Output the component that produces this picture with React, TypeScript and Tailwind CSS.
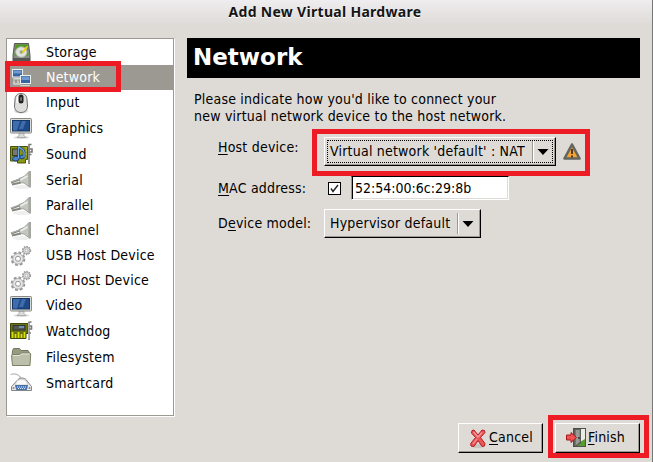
import type { ReactNode } from 'react';

function Svg({ children, size = 24 }: { children: ReactNode; size?: number }) {
  return <svg width={size} height={size} viewBox="0 0 24 24" fill="none" className="block shrink-0">{children}</svg>;
}

function DiskIcon() {
  return (
    <Svg>
      <path d="M4.500 3.500h14l1.500 12v5.500h-17v-5.500z" fill="#8a8c86" stroke="#555753" />
      <path d="M5.500 4.500h12l1 11h-14z" fill="#4e9a20" />
      <ellipse cx="11.300" cy="12" rx="5.800" ry="5.300" fill="#dfe3d8" stroke="#a9aea1" />
      <circle cx="11.300" cy="12" r="1.700" fill="#9ba193" />
      <path d="M12 12l4-5.500 2-.5-1 2.500-4 5z" fill="#edd400" />
      <path d="M3 18h17v3H3z" fill="#555753" />
    </Svg>
  );
}

function NetworkIcon() {
  return (
    <Svg>
      <path d="M4 13v5h7M8 13v4" stroke="#d3d7cf" strokeWidth="1.500" />
      <path d="M3.500 11.500h7l1.500 2.500H2z" fill="#d3d7cf" stroke="#888a85" strokeWidth=".7" />
      <rect x="2.500" y="3.500" width="10" height="7.500" fill="#3465a4" stroke="#eeeeec" />
      <path d="M3.500 4.500h8v3h-8z" fill="#6f9bd1" />
      <rect x="10.500" y="9.500" width="10" height="8" fill="#3465a4" stroke="#eeeeec" />
      <path d="M11.500 10.500h8v3.500h-8z" fill="#6f9bd1" />
      <path d="M10.500 18.500h9l1.500 2H9z" fill="#d3d7cf" stroke="#888a85" strokeWidth=".7" />
    </Svg>
  );
}

function MouseIcon() {
  return (
    <Svg>
      <ellipse cx="11" cy="20" rx="7" ry="2.500" fill="#ddd" />
      <path d="M5 9c0-4 2-6.500 6-6.500S17 5 17 9l.5 6c0 4-2.500 6.500-6.500 6.500S4.500 19 4.500 15z" fill="#dededc" stroke="#6b6d69" />
      <path d="M6.500 9c0-3 1-4.500 3-5v7l-3 1z" fill="#fff" />
      <rect x="8.500" y="3.500" width="5" height="9" rx="2.500" fill="#222" />
      <rect x="10.300" y="6" width="1.500" height="4" rx=".7" fill="#888" />
    </Svg>
  );
}

function MonitorIcon() {
  return (
    <Svg>
      <ellipse cx="11.500" cy="21.500" rx="8" ry="1.500" fill="#ddd" />
      <path d="M9 17h5v2.500l2 2H7l2-2z" fill="#dcdddb" stroke="#9a9c98" strokeWidth=".7" />
      <rect x=".5" y="2.500" width="21" height="14.500" rx=".8" fill="#dcdcd8" stroke="#888a85" />
      <rect x="2.500" y="4.500" width="17" height="10.500" fill="#204a87" stroke="#163766" />
      <path d="M3 5h7L7 14.500H3zM12 5h4l-3 8h-4z" fill="#4a78b8" opacity=".75" />
    </Svg>
  );
}

function SoundIcon() {
  return (
    <Svg>
      <path d="M.5 4.500h17v13h-2v3.500h-8v-2h-7z" fill="#8a9810" stroke="#4b5310" />
      <rect x="2.500" y="7" width="7" height="6.500" fill="#777975" stroke="#3b4210" />
      <path d="M2.500 16.500h4M15.500 6h1.500M15.500 9h1.500M15.500 12h1.500" stroke="#c4d025" />
      <path d="M19 22V2.500h2.500M19.500 7h2.500v3h-2.500M19 12.500h2.500" stroke="#777975" strokeWidth="1.600" />
      <path d="M8.500 16V4.500c1 2.500 5.500 2 5.500 5.500v4.500" stroke="#173e73" strokeWidth="2.600" />
      <ellipse cx="5.800" cy="16.700" rx="3.300" ry="2.300" fill="#4b85ce" stroke="#173e73" />
      <ellipse cx="12" cy="15" rx="2.300" ry="1.900" fill="#4b85ce" stroke="#173e73" />
      <path d="M8.500 16V4.500c1 2.500 5.500 2 5.500 5.500v5" stroke="#73a6df" strokeWidth="1.300" />
    </Svg>
  );
}

function ConnectorIcon() {
  return (
    <Svg>
      <ellipse cx="12" cy="19" rx="9" ry="2" fill="#efefef" />
      <path d="M1 14.500l10-3.500M2 16.500l9-2" stroke="#85877f" strokeWidth="2" />
      <path d="M1 14l10-3.500" stroke="#b9bbb5" strokeWidth=".9" />
      <path d="M9 10.500l5-2L19 3.500v15L14 15l-4-.5z" fill="#c4c7c0" stroke="#92958e" strokeWidth=".8" />
      <path d="M10.500 12l7-4" stroke="#eceeea" strokeWidth="1.500" />
      <path d="M20 3v16.500" stroke="#a5a8a1" strokeWidth="2" />
    </Svg>
  );
}

function GearsIcon() {
  return (
    <Svg>
      <circle cx="16.500" cy="6.500" r="3.200" fill="#ddd" stroke="#aaa" strokeWidth="1" />
      <circle cx="16.500" cy="6.500" r="4" stroke="#999" strokeWidth="1.300" strokeDasharray="1.600 1" />
      <circle cx="16.500" cy="6.500" r="1.300" fill="#fff" stroke="#aaa" strokeWidth=".8" />
      <circle cx="8" cy="14.800" r="6.300" stroke="#969696" strokeWidth="2" strokeDasharray="2.900 2" />
      <circle cx="8" cy="14.800" r="5.300" fill="#e5e5e3" stroke="#aaa" strokeWidth=".9" />
      <circle cx="8" cy="14.800" r="2.500" fill="#fff" stroke="#969696" strokeWidth="1" />
    </Svg>
  );
}

function CardIcon() {
  return (
    <Svg>
      <path d="M.5 4.500h17.500v10h-2v5H.5z" fill="#697312" stroke="#3f460c" />
      <rect x="3" y="6.500" width="12" height="4.500" fill="#555753" stroke="#2e3436" />
      <path d="M9 8h5" stroke="#75a2d3" strokeWidth="1.500" />
      <path d="M2.500 13v6M5.500 15v4M8.500 13v6M11.500 15v4M14.500 13v6" stroke="#dbe000" strokeWidth="1.700" />
      <path d="M19 21V2.500M19.500 3h2M19 7h2.500v3H19M19 14h2" stroke="#777975" strokeWidth="1.600" />
      <path d="M18.800 20V4" stroke="#ddd" strokeWidth=".7" />
    </Svg>
  );
}

function FolderIcon() {
  return (
    <Svg>
      <path d="M2.500 5.500l1-2h6l1.500 2h7l1 1.500V12h-17z" fill="#989b82" stroke="#74775e" />
      <path d="M1.500 10.500l1-1h6.500l2-1.500h9l.7 1-.7 11.500h-17.500z" fill="#bcbfa9" stroke="#7d8068" />
      <path d="M3 10.500h6.500l2-1.500h8" stroke="#e2e4d3" />
    </Svg>
  );
}

function SmartcardIcon() {
  return (
    <Svg>
      <path d="M.5 3.500c3-1 7-1 10 3l1.500 3" stroke="#bbb" strokeWidth="1.300" />
      <path d="M8 8.500c2-2 6-2 8 0l5.500 7v4H1.500v-4z" fill="#e7e7e5" stroke="#85888a" />
      <path d="M7 10c2-2 7-2 9 0l2 4H5z" fill="#fafafa" stroke="#bbb" strokeWidth=".6" />
      <path d="M5.500 14.500h12l-1 4h-10z" fill="#4879ba" stroke="#2d548b" strokeWidth=".7" />
      <path d="M7 16h9M8 17.500h7" stroke="#dce9f8" strokeDasharray="1 1" />
      <circle cx="3.500" cy="17" r="1" fill="#888" />
      <circle cx="19.500" cy="17" r="1" fill="#888" />
    </Svg>
  );
}

const devices = [
  { name: 'Storage', icon: <DiskIcon />, row: 'h-[26px]' },
  { name: 'Network', icon: <NetworkIcon />, row: 'h-[25px] bg-[#9c9993] text-white' },
  { name: 'Input', icon: <MouseIcon />, row: 'h-[25px]' },
  { name: 'Graphics', icon: <MonitorIcon />, row: 'h-[26px]' },
  { name: 'Sound', icon: <SoundIcon />, row: 'h-[26px]' },
  { name: 'Serial', icon: <ConnectorIcon />, row: 'h-[26px]' },
  { name: 'Parallel', icon: <ConnectorIcon />, row: 'h-[25px]' },
  { name: 'Channel', icon: <ConnectorIcon />, row: 'h-[25px]' },
  { name: 'USB Host Device', icon: <GearsIcon />, row: 'h-[25px]' },
  { name: 'PCI Host Device', icon: <GearsIcon />, row: 'h-[25px]' },
  { name: 'Video', icon: <MonitorIcon />, row: 'h-[25px]' },
  { name: 'Watchdog', icon: <CardIcon />, row: 'h-[26px]' },
  { name: 'Filesystem', icon: <FolderIcon />, row: 'h-[26px]' },
  { name: 'Smartcard', icon: <SmartcardIcon />, row: 'h-[26px]' },
];

function Key({ children }: { children: string }) {
  return <span className="underline decoration-1 underline-offset-2">{children}</span>;
}

const raised = 'border border-t-white border-l-white border-r-black border-b-black shadow-[inset_-1px_-1px_0_#9c9993]';

function Combo({ text, width, focused = false }: { text: string; width: string; focused?: boolean }) {
  return (
    <div className={`relative flex h-[29px] items-center pl-[5px] pr-[6px] ${raised} ${width}`}>
      {focused && <div className="absolute inset-[2px] border border-dotted border-black" />}
      <span className="flex-1 whitespace-nowrap">{text}</span>
      <span className="mr-[3px] h-[21px] w-[2px] border-l border-r border-l-[#9c9993] border-r-white" />
      <svg width="12" height="8" viewBox="0 0 12 8"><path d="M.5 1h11L6 7z" fill="#000" /></svg>
    </div>
  );
}

function WarningIcon() {
  return (
    <svg width="20" height="19" viewBox="0 0 20 19">
      <path d="M10 2.500L17.500 16.500h-15z" fill="#f5a332" stroke="#646560" strokeWidth="2.600" strokeLinejoin="round" />
      <path d="M10 7v5M10 13.500v2" stroke="#3b3424" strokeWidth="1.800" />
    </svg>
  );
}

function CancelIcon() {
  return (
    <svg width="16" height="19" viewBox="0 0 16 19">
      <ellipse cx="8" cy="17" rx="7" ry="2" fill="#c9c6c1" />
      <path d="M2 1.500l2-.5 4 5 4-5 2.500.5.500 2-4.500 5 4.500 6-.5 2.500-2.500.5-4-6-4 6L1 17l-.3-2.500 4.800-6L1.500 4z" fill="#ea5555" stroke="#b51d22" />
      <path d="M3.500 3L8 8l4-4.500M3 15l4-5" stroke="#f79a9a" strokeWidth="1.200" fill="none" />
    </svg>
  );
}

function FinishIcon() {
  return (
    <svg width="20" height="20" viewBox="0 0 20 20">
      <rect x="7.500" y=".5" width="12" height="18" fill="#e9ece5" stroke="#50524e" />
      <path d="M14 14l5-3v7h-9z" fill="#579c31" />
      <path d="M8 1h6.500v14L9 18.500H8z" fill="#737570" stroke="#454743" strokeWidth=".8" />
      <path d="M10 2h3.500v12L10 17z" fill="#989b95" />
      <circle cx="13" cy="10" r="1" fill="#333" />
      <path d="M.5 7H5V4.500L10.500 9.500 5 14.500V12H.5z" fill="#ed5353" stroke="#a8191c" />
    </svg>
  );
}

export default function App() {
  return (
    <div className="relative h-[462px] w-[653px] overflow-hidden border-r border-[#777] bg-[#dedbd6] font-['DejaVu_Sans_Condensed','DejaVu_Sans',sans-serif] text-[14px] leading-[17px] tracking-[0.21px] text-black [font-stretch:condensed]">
      <header className="flex h-[24px] justify-center bg-linear-to-b from-[#efedef] to-[#dedbd8] pr-[2px]">
        <h1 className="whitespace-nowrap font-['Noto_Sans',sans-serif] text-[14px] font-bold leading-[24px] tracking-[0.3px] text-[#151515] [font-stretch:normal] [text-shadow:0_1px_0_#fff]">Add New Virtual Hardware</h1>
      </header>
      <main className="flex gap-[13px] pl-[6px] pt-[14px]">
        <ul className="h-[378px] w-[168px] shrink-0 border border-[#9c9993] bg-white shadow-[1px_1px_0_#fff]">
          {devices.map((d) => (
            <li key={d.name} className={`flex items-center gap-[12px] pl-[3px] ${d.row}`}>
              {d.icon}<span>{d.name}</span>
            </li>
          ))}
        </ul>
        <section className="w-[453px]">
          <h2 className="h-[40px] bg-black pl-[6px] font-['DejaVu_Sans',sans-serif] text-[23px] font-bold leading-[39px] tracking-normal text-white [font-stretch:normal]">Network</h2>
          <p className="mt-[13px] whitespace-nowrap pl-[7px]">Please indicate how you'd like to connect your<br />new virtual network device to the host network.</p>
          <div className="mt-[12px] flex h-[29px] pl-[31px]">
            <label className="w-[106px] pt-[2px]"><Key>H</Key>ost device:</label>
            <Combo text="Virtual network 'default' : NAT" width="w-[232px]" focused />
            <span className="ml-[6px] mt-[5px]"><WarningIcon /></span>
          </div>
          <div className="mt-[10px] flex h-[24px] items-center pl-[31px]">
            <label className="w-[110px]"><Key>M</Key>AC address:</label>
            <span className="flex h-[13px] w-[13px] items-center justify-center border border-black bg-white">
              <svg width="9" height="9" viewBox="0 0 9 9"><path d="M1 4.500l2 3L8 1" stroke="#222" strokeWidth="1.400" fill="none" /></svg>
            </span>
            <div className="ml-[10px] h-[24px] w-[158px] border border-b-white border-l-[#9c9993] border-r-white border-t-black bg-white pl-[3px] leading-[22px] tracking-normal shadow-[inset_1px_0_0_#000,inset_-1px_-1px_0_#dedbd6]">52:54:00:6c:29:8b</div>
          </div>
          <div className="mt-[9px] flex h-[29px] items-center pl-[31px]">
            <label className="w-[106px] whitespace-nowrap">D<Key>e</Key>vice model:</label>
            <Combo text="Hypervisor default" width="w-[157px]" />
          </div>
        </section>
      </main>
      <footer className="mt-[7px] flex justify-end gap-[12px] pr-[12px]">
        <button className={`flex h-[30px] w-[85px] items-center gap-[3px] pl-[11px] ${raised}`}><CancelIcon /><span className="-mt-[2px]"><Key>C</Key>ancel</span></button>
        <button className={`flex h-[30px] w-[85px] items-center gap-[2px] pl-[10px] ${raised}`}><FinishIcon /><span className="-mt-[2px]"><Key>F</Key>inish</span></button>
      </footer>
      <div className="absolute left-[5px] top-[61px] h-[31px] w-[116px] border-[5px] border-[#ed1c24]" />
      <div className="absolute left-[312px] top-[129px] h-[47px] w-[278px] border-[5px] border-[#ed1c24]" />
      <div className="absolute left-[548px] top-[415px] h-[43px] w-[101px] border-[5px] border-[#ed1c24]" />
    </div>
  );
}
